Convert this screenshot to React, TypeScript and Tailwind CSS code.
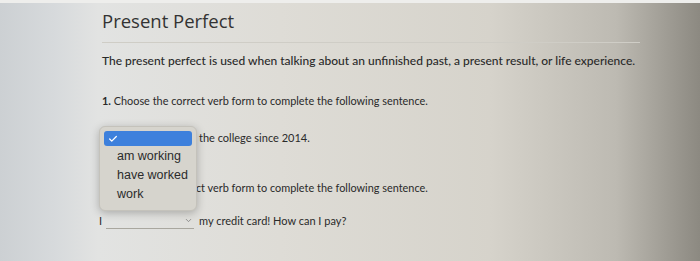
import { Check, ChevronDown } from 'lucide-react';

const bodyFont = { fontFamily: 'Lato, "Noto Sans", sans-serif' };

function SelectBox({ placeholderWidth = 'w-[88px]' }: { placeholderWidth?: string }) {
  return (
    <span className={`relative inline-flex items-center justify-end ${placeholderWidth} h-[16px] border-b border-[#a9a79f] mr-[5px]`}>
      <ChevronDown className="w-[9px] h-[9px] text-[#777] mr-[1px]" strokeWidth={2} />
    </span>
  );
}

function Popup() {
  const options = ['am working', 'have worked', 'work'];
  return (
    <div
      className="absolute left-[-3px] top-[-4px] w-[98px] rounded-[6px] bg-[#d6d4cd] shadow-[0_2px_8px_rgba(0,0,0,0.25)] border border-[#c4c2bb] px-[4px] pt-[4px] pb-[6px]"
      style={{ fontFamily: '"Liberation Sans", Arial, sans-serif' }}
    >
      <div className="h-[15px] rounded-[3px] bg-[#3d80dc] flex items-center pl-[4px]">
        <Check className="w-[10px] h-[10px] text-white" strokeWidth={3} />
      </div>
      <div className="pt-[1px]">
        {options.map((o) => (
          <div key={o} className="pl-[13px] text-[12.5px] leading-[19px] text-[#2b2b2b]">
            {o}
          </div>
        ))}
      </div>
    </div>
  );
}

export default function App() {
  return (
    <div className="w-[700px] h-[261px] overflow-hidden bg-[linear-gradient(90deg,#ccd0d3_0%,#d7dadc_8%,#e2e3e2_14%,#dedcd6_40%,#d6d3cb_70%,#bdbab2_88%,#8c8981_100%)] border-t-[3px] border-[#eeeeec]">
      <div className="pl-[102px] pr-[60px] pt-[5px] text-[#2a2a2a]" style={bodyFont}>
        <h1
          className="text-[18.5px] leading-[26px] text-[#333] pb-[8px] border-b border-[#cfcdc6]"
          style={{ fontFamily: '"Open Sans", sans-serif' }}
        >
          Present Perfect
        </h1>
        <p className="mt-[10px] text-[12px] leading-[16px] font-medium whitespace-nowrap">
          The present perfect is used when talking about an unfinished past, a present result, or life experience.
        </p>
        <p className="mt-[24px] text-[10.9px] leading-[16px]">
          <span className="font-bold">1.</span> Choose the correct verb form to complete the following sentence.
        </p>
        <div className="relative mt-[21px] flex items-center text-[11px] leading-[16px]">
          <SelectBox placeholderWidth="w-[92px]" />
          <span>the college since 2014.</span>
          <Popup />
        </div>
        <p className="mt-[34px] text-[10.9px] leading-[16px]">
          <span className="font-bold">2.</span> Choose the correct verb form to complete the following sentence.
        </p>
        <div className="mt-[17px] -ml-[3px] flex items-center text-[11px] leading-[16px]">
          <span className="mr-[4px]">I</span>
          <SelectBox placeholderWidth="w-[88px]" />
          <span>my credit card! How can I pay?</span>
        </div>
      </div>
    </div>
  );
}
